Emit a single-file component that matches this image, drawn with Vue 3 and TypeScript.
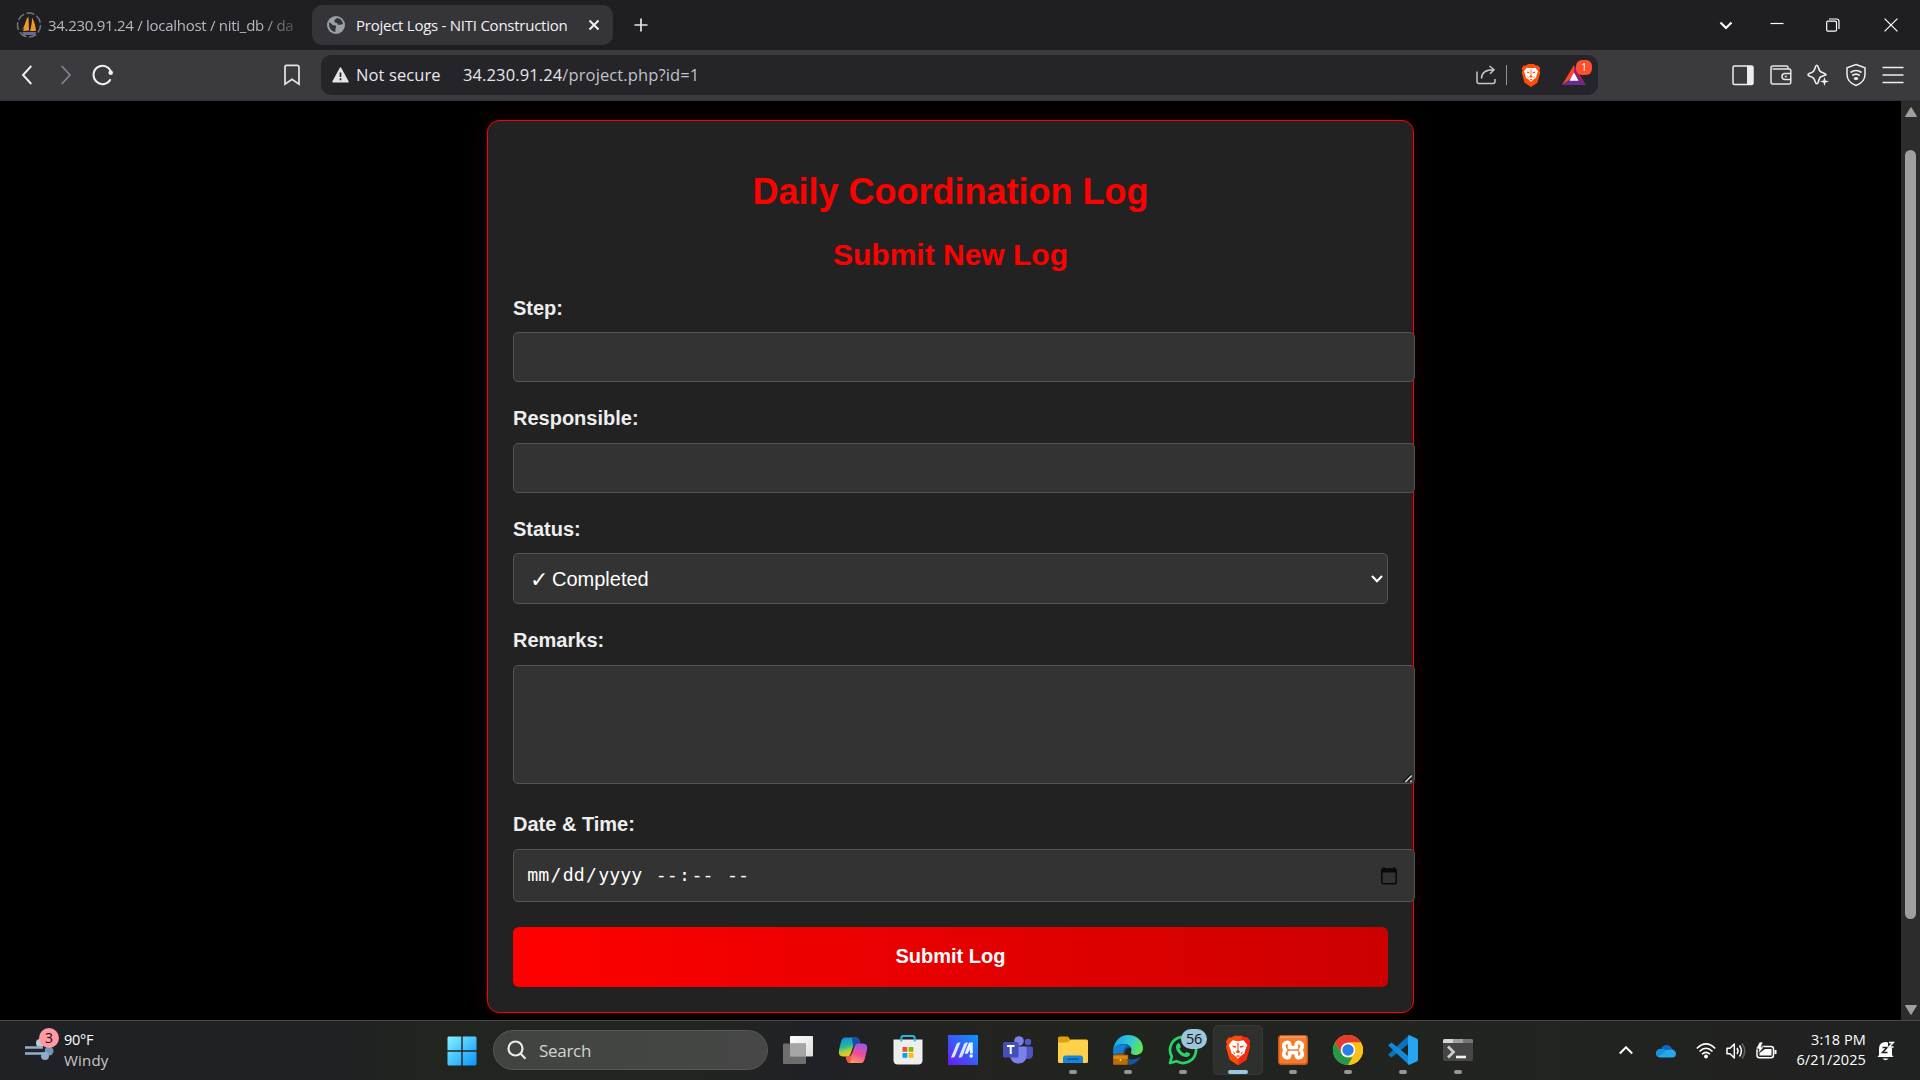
<script setup lang="ts">
import { ref } from 'vue'

const step = ref('')
const responsible = ref('')
const remarks = ref('')
const dateParts = ['mm', '/', 'dd', '/', 'yyyy']
</script>

<template>
  <div class="screen">
    <header class="tabbar">
      <div class="tab idle">
        <svg width="26" height="28" viewBox="0 0 26 28">
          <ellipse cx="13" cy="14" rx="11.5" ry="12" fill="none" stroke="#77767a" stroke-width="1.5" stroke-dasharray="8 2.5" />
          <path d="M11.5 5.500 C12 11 10 16 5.500 19 C8.500 16 9.500 11 11.500 5.500Z M12.500 5.500 L13 19.500 L7 20Z M16 6.500 C18.500 11 19.500 15 20 20 L14 20 C15.500 15 16 11 16 6.500Z" fill="#f39a1e" />
          <path d="M6 21 H20.500 L18.500 24 H8Z" fill="#66699b" />
        </svg>
        <span class="tab-title t-idle">34.230.91.24 / localhost / niti_db / da</span>
      </div>
      <div class="tab active">
        <svg width="18" height="18" viewBox="0 0 18 18">
          <circle cx="9" cy="9" r="9" fill="#9aa0a6" />
          <path d="M2 6.500 C4 6.500 4.500 9.200 7 9.300 C9.500 9.400 9.500 11 8.500 12.500 L8.300 16 C4.500 15.500 1.500 12 2 6.500Z M10 2 C8.500 3.500 7 3.500 7.500 5.500 C8 7.300 10.500 6.300 10.500 8 C10.500 9.500 14.500 8.500 16 8 C15.800 5 13.500 2.500 10 2Z" fill="#343439" />
        </svg>
        <span class="tab-title t-active">Project Logs - NITI Construction</span>
        <svg class="tab-close" width="12" height="12" viewBox="0 0 12 12"><path d="M1.500 1.500 L10.500 10.500 M10.500 1.500 L1.500 10.500" stroke="#f2f2f4" stroke-width="2" /></svg>
      </div>
      <svg class="plus" width="14" height="14" viewBox="0 0 14 14"><path d="M7 0.500V13.500M0.500 7H13.500" stroke="#e4e4e8" stroke-width="1.700" /></svg>
      <div class="window-controls">
        <svg width="14" height="14" viewBox="0 0 14 14"><path d="M1.500 4.500L7 10L12.500 4.500" fill="none" stroke="#fff" stroke-width="2.200" /></svg>
        <svg width="14" height="14" viewBox="0 0 14 14"><path d="M.5 5.500H13.500" stroke="#fff" stroke-width="1.200" /></svg>
        <svg width="14" height="14" viewBox="0 0 14 14" fill="none" stroke="#fff" stroke-width="1.200"><rect x=".7" y="3.200" width="9.800" height="10" rx="1.200" /><path d="M3 1H10.500Q13 1 13 3.500V11" /></svg>
        <svg width="14" height="14" viewBox="0 0 14 14"><path d="M.6.6L13.400 13.400M13.400.6L.6 13.400" stroke="#fff" stroke-width="1.200" /></svg>
      </div>
    </header>

    <nav class="toolbar">
      <svg class="back" width="12" height="20" viewBox="0 0 12 20"><path d="M10.300 1L2 10L10.300 19" fill="none" stroke="#f2f2f4" stroke-width="1.900" /></svg>
      <svg class="forward" width="12" height="20" viewBox="0 0 12 20"><path d="M1.700 1L10 10L1.700 19" fill="none" stroke="#85848a" stroke-width="1.700" /></svg>
      <svg class="reload" width="22" height="22" viewBox="0 0 22 22"><path d="M18.500 15.200A9 9.200 0 1 1 18.900 7.500" fill="none" stroke="#f2f2f4" stroke-width="2" /><circle cx="18.700" cy="8.800" r="2.300" fill="#f2f2f4" /></svg>
      <svg class="bookmark" width="18" height="22" viewBox="0 0 18 22"><path d="M3.500 1.300H14.500Q16 1.300 16 3V20.200L9 15.200L2 20.200V3Q2 1.300 3.500 1.300Z" fill="none" stroke="#e6e6ea" stroke-width="1.700" /></svg>
      <div class="address">
        <svg class="warn" width="17" height="16" viewBox="0 0 17 16"><path d="M8.500 1.200L16 14.800H1Z" fill="#e4e4e8" stroke="#e4e4e8" stroke-width="1.600" stroke-linejoin="round" /><path d="M8.500 5.500V10M8.500 11.300V13.200" stroke="#252429" stroke-width="1.700" /></svg>
        <span class="not-secure">Not secure</span>
        <span class="url">34.230.91.24<i>/project.php?id=1</i></span>
        <div class="address-actions">
          <svg width="20" height="20" viewBox="0 0 20 20" fill="none" stroke="#c5c5ca" stroke-width="1.500"><path d="M1 6.500V16.500Q1 18.500 3 18.500H17Q19 18.500 19 16.500V14" /><path d="M5.500 13.500C5.500 8 9.500 4.700 17.500 4.700M13.500 1L18 4.700L14 8.800" /></svg>
          <i class="separator"></i>
          <svg class="brave-small" width="20" height="23" viewBox="0 0 28 32">
            <path d="M7 2L10 0H18L21 2L24 2L27 6L26 9L27 12L23 26L14 32L5 26L1 12L2 9L1 6L4 2Z" fill="#ff4d0a" />
            <path d="M8 5L14 6L20 5L24 10L22 15L21 19L17 22L14 25L11 22L7 19L6 15L4 10Z" fill="#fff" />
            <path d="M7.500 10.500L12 11.300L11.500 13L9 12.500ZM20.500 10.500L16 11.300L16.500 13L19 12.500ZM13.300 8H14.700L14.500 15.500L16.500 17.500L14 19L11.500 17.500L13.500 15.500ZM8.500 16.500L11 19L10 20ZM19.500 16.500L17 19L18 20ZM11.500 22L14 21L16.500 22L14 23Z" fill="#ff4d0a" />
          </svg>
          <div class="rewards">
            <svg width="24" height="20" viewBox="0 0 24 20"><path d="M12 0L0 20L12 12Z" fill="#ff4724" /><path d="M12 0L24 20L12 12Z" fill="#9e1f63" /><path d="M0 20H24L12 11Z" fill="#662d91" /><path d="M12 7.500L16.500 15.700H7.500Z" fill="#fff" /></svg>
            <b>1</b>
          </div>
        </div>
      </div>
      <div class="browser-actions">
        <svg width="22" height="22" viewBox="0 0 22 22"><rect x="1" y="2" width="20" height="18.500" rx="1.500" fill="none" stroke="#ededf0" stroke-width="1.500" /><rect x="15" y="2" width="6" height="18.500" fill="#ededf0" /></svg>
        <svg width="22" height="22" viewBox="0 0 22 22" fill="none" stroke="#e6e6ea" stroke-width="1.500"><path d="M18 5V3.500Q18 2 16.500 2H3Q1 2 1 4V18Q1 20 3 20H19Q20.800 20 20.800 18V6.500Q20.800 5 19 5H2.500" /><path d="M21 9.500H15Q12 9.500 12 12.500Q12 15.500 15 15.500H21M14.800 12.500H16.800" /></svg>
        <svg width="22" height="22" viewBox="0 0 22 22"><path d="M9.800 1.200Q10.800 1.200 11.300 3.200C12.200 6.800 13 8 17 9.200Q19 9.800 19 10.800L13.500 13C12.200 14 12 16 11.200 18.300Q10.700 19.800 9.800 19.800Q8.900 19.800 8.300 18C7.200 14.500 6.500 13.500 2.800 12.300Q1 11.500 1 10.700Q1 9.900 2.800 9.300C6.500 8 7.200 7 8.300 3.200Q8.800 1.200 9.800 1.200Z" fill="none" stroke="#eeeef1" stroke-width="1.600" /><path d="M17.500 13L18.600 16.400L22 17.500L18.600 18.600L17.500 22L16.400 18.600L13 17.500L16.400 16.400Z" fill="#eeeef1" /></svg>
        <svg width="22" height="24" viewBox="0 0 22 24" fill="none" stroke="#eeeef1" stroke-width="1.500"><path d="M11 1.500L20 4.800V11C20 16.500 16.500 20.500 11 22.500C5.500 20.500 2 16.500 2 11V4.800Z" /><path d="M5.500 9.500Q11 5.500 16.500 9.500M7.200 12.500Q11 9.700 14.800 12.500" stroke-width="1.700" /><ellipse cx="11" cy="15.500" rx="2.200" ry="1.500" fill="#eeeef1" stroke="none" /></svg>
        <svg width="22" height="18" viewBox="0 0 22 18"><path d="M.5 1.500H21.500M.5 9H21.500M.5 16.500H21.500" stroke="#eeeef1" stroke-width="1.700" /></svg>
      </div>
    </nav>

    <div class="viewport">
      <main>
        <section class="card">
          <h1>Daily Coordination Log</h1>
          <h2>Submit New Log</h2>
          <form @submit.prevent>
            <label>Step:</label>
            <input v-model="step" class="field step" type="text" />
            <label>Responsible:</label>
            <input v-model="responsible" class="field responsible" type="text" />
            <label>Status:</label>
            <div class="field status">
              <span class="check">✓</span><span>Completed</span>
              <svg width="12" height="8" viewBox="0 0 12 8"><path d="M1 1L6 6.200L11 1" fill="none" stroke="#fff" stroke-width="2.200" /></svg>
            </div>
            <label>Remarks:</label>
            <div class="remarks-wrap">
              <textarea v-model="remarks" class="field remarks"></textarea>
              <svg class="grip" width="10" height="10" viewBox="0 0 10 10"><path d="M.5 9L8.500 1M5.500 9L8.500 6" stroke="#0d0d0d" stroke-width="1.500" /><path d="M2.200 9L8.700 2.500M7.200 9L8.700 7.500" stroke="#d6d6d6" stroke-width="1.500" /></svg>
            </div>
            <label class="date-label">Date &amp; Time:</label>
            <div class="field date">
              <span v-for="(part, i) in dateParts" :key="i" :class="{ part: part !== '/' }">{{ part }}</span>
              <span class="gap"></span>
              <span class="part">--</span><span>:</span><span class="part">--</span>
              <span class="gap"></span><span class="part">--</span>
              <svg width="16" height="18" viewBox="0 0 16 18"><path d="M3.200 0V2M12.800 0V2" stroke="#0a0a0a" stroke-width="1.600" /><rect x=".8" y="2" width="14.400" height="14.700" rx="1.400" fill="none" stroke="#0a0a0a" stroke-width="1.600" /><path d="M.5 1.800H15.500V5.500H.5Z" fill="#0a0a0a" /></svg>
            </div>
            <button type="submit">Submit Log</button>
          </form>
        </section>
      </main>
      <aside class="scrollbar">
        <svg width="12" height="10" viewBox="0 0 12 10"><path d="M6 .5L11.500 9.500H.5Z" fill="#a0a0a0" stroke="#a0a0a0" stroke-linejoin="round" /></svg>
        <i class="thumb"></i>
        <svg class="down" width="12" height="10" viewBox="0 0 12 10"><path d="M6 9.500L11.500 .5H.5Z" fill="#a0a0a0" stroke="#a0a0a0" stroke-linejoin="round" /></svg>
      </aside>
    </div>

    <footer class="taskbar">
      <div class="weather">
        <div class="wind">
          <svg width="30" height="32" viewBox="0 0 30 32">
            <circle cx="15" cy="14" r="4" fill="#bccbdc" /><circle cx="24" cy="22" r="4.500" fill="#7296b7" /><circle cx="20" cy="27" r="4" fill="#8eabca" />
            <path d="M0 18.500H18M0 24.500H21" stroke="#91aecb" stroke-width="2.600" /><path d="M0 21.500H20" stroke="#24272b" stroke-width="2" />
          </svg>
          <b>3</b>
        </div>
        <div class="weather-text"><span>90°F</span><span class="muted">Windy</span></div>
      </div>

      <div class="apps">
        <div class="slot start">
          <svg width="30" height="30" viewBox="0 0 30 30"><defs><linearGradient id="win" x1="0" y1="0" x2="1" y2="1"><stop offset="0" stop-color="#83f3ff" /><stop offset="1" stop-color="#0b93fb" /></linearGradient></defs><path d="M1.500 .5H14.300V14.300H.5V1.500ZM15.700 .5H28.500L29.500 1.500V14.300H15.700ZM.5 15.700H14.300V29.500H1.500L.5 28.500ZM15.700 15.700H29.500V28.500L28.500 29.500H15.700Z" fill="url(#win)" /></svg>
        </div>
        <div class="search">
          <svg width="20" height="20" viewBox="0 0 20 20" fill="none" stroke="#e8e9e8" stroke-width="2.200"><circle cx="8.500" cy="8.500" r="7" /><path d="M13.500 13.500L18.500 18.800" /></svg>
          <span>Search</span>
        </div>
        <div class="slot">
          <svg width="30" height="30" viewBox="0 0 30 30"><defs><linearGradient id="tv" x2="1" y2="1"><stop stop-color="#fff" /><stop offset="1" stop-color="#dcdcdc" /></linearGradient></defs><rect x="7" y="1" width="23" height="20.500" rx="1" fill="url(#tv)" /><rect x="0" y="8.500" width="23" height="20.500" rx="1" fill="#777" opacity=".9" /><rect x="7" y="8.500" width="16" height="13" fill="#a5a5a5" /></svg>
        </div>
        <div class="slot">
          <svg width="30" height="28" viewBox="0 0 30 28"><defs><linearGradient id="cpa" x2=".3" y2="1"><stop stop-color="#1784e6" /><stop offset=".5" stop-color="#22b8a0" /><stop offset=".75" stop-color="#a8cf3c" /><stop offset="1" stop-color="#f7c51d" /></linearGradient><linearGradient id="cpb" x1=".7" x2=".3" y2="1"><stop stop-color="#9a58e8" /><stop offset=".5" stop-color="#ee4d9a" /><stop offset="1" stop-color="#ffa052" /></linearGradient></defs>
            <path d="M7 1.500H18Q20.500 1.500 21.300 4.500L22.300 8H18Q15.800 8 15 11L12.500 18Q11.500 20.500 9 20.500H5Q0 20.500 1 14L3 6Q4 1.500 7 1.500Z" fill="url(#cpa)" />
            <path d="M14 1.500H18Q20.500 1.500 21.300 4.500L22.300 8H18Q16 8 15 11Z" fill="#194dad" />
            <path d="M23 27H12Q9.500 27 8.700 24L7.700 20.500H10Q13 20.500 14 17.500L16.700 10Q17.500 7.500 20 7.500H25Q30 7.500 29 13.500L27 22Q26 27 23 27Z" fill="url(#cpb)" />
            <path d="M12 27Q9.500 27 8.700 24L7.700 20.500H10Q13 20.500 14 17.500L13 24Z" fill="#ef5746" /></svg>
        </div>
        <div class="slot">
          <svg width="30" height="30" viewBox="0 0 30 30"><path d="M8.300 6V3Q8.300 1 10.300 1H19.700Q21.700 1 21.700 3V6" fill="none" stroke="#24b7e5" stroke-width="2" /><path d="M.5 4.500H29.500V25Q29.500 29.500 25 29.500H5Q.5 29.500 .5 25Z" fill="#eeeeee" /><path d="M8.300 4V6.500M21.700 4V6.500" stroke="#24b7e5" stroke-width="2" /><path d="M9.500 12H14.300V16.800H9.500Z" fill="#f25022" /><path d="M15.600 12H20.400V16.800H15.600Z" fill="#7fba00" /><path d="M9.500 18H14.300V22.800H9.500Z" fill="#00a4ef" /><path d="M15.600 18H20.400V22.800H15.600Z" fill="#ffb900" /></svg>
        </div>
        <div class="slot">
          <svg width="30" height="30" viewBox="0 0 30 30"><defs><linearGradient id="asus" x1="0" y1="1" x2="1" y2="0"><stop stop-color="#6d18f5" /><stop offset="1" stop-color="#059bfa" /></linearGradient></defs><rect width="30" height="30" fill="url(#asus)" /><path d="M3 22.500L8.500 9Q9.200 7.500 10.700 7.500H12.500L7 21Q6.300 22.500 4.800 22.500ZM10.500 22.500L16 9Q16.700 7.500 18.200 7.500H20L14.500 21Q13.800 22.500 12.300 22.500Z" fill="#dbe3ff" /><path d="M21 7.500H24.800V18.500H22V14.500L19.500 18.700H16.500Z" fill="#e6f0ff" /><circle cx="23.200" cy="21" r="1.700" fill="#fff" /></svg>
        </div>
        <div class="slot">
          <svg width="30" height="28" viewBox="0 0 30 28"><circle cx="25" cy="6" r="3.200" fill="#5059c9" /><path d="M19 10.500H28.500Q30 10.500 30 12V18Q30 23 25 23L19 22Z" fill="#4c55c4" /><circle cx="16" cy="5" r="4.800" fill="#7b83eb" /><path d="M8 10.500H22Q23.500 10.500 23.500 12V19Q23.500 27.500 15.500 27.500Q8 27.500 7 20Z" fill="#7b83eb" /><rect y="6" width="15.500" height="15.500" rx="1.500" fill="#454fb8" /><path d="M4 10H11.500M7.750 10V18" stroke="#fff" stroke-width="2" /></svg>
        </div>
        <div class="slot open">
          <svg width="30" height="28" viewBox="0 0 30 28"><path d="M0 2Q0 .5 1.500 .5H10L13 4.500H28.500Q30 4.500 30 6V26H0Z" fill="#dfa00c" /><path d="M0 6.500H9L13 3.500H28.500Q30 3.500 30 5V25.500Q30 27 28.500 27H1.500Q0 27 0 25.500Z" fill="#ffd04a" /><path d="M5 27V22Q5 19.500 7.500 19.500H22.500Q25 19.500 25 22V27Z" fill="#1685dc" /><path d="M9.500 23.200H20.500" stroke="#0b558f" stroke-width="1.500" /></svg>
        </div>
        <div class="slot open">
          <svg width="30" height="30" viewBox="0 0 30 30"><defs><linearGradient id="ea" x2="1" y2=".3"><stop stop-color="#159be6" /><stop offset=".6" stop-color="#31c7d9" /><stop offset="1" stop-color="#5ee45c" /></linearGradient></defs><path d="M0 16C1 6 7 0 15 0C24 0 30 6 30 13C30 18 26 20 22.500 20C19 20 17.500 18.500 18 17C20 13 16 9 11 9C6 9 2 11 0 16Z" fill="url(#ea)" /><path d="M0 15C2 11 6 9 11 9C14 9 17 10.500 18 13C13 12 11 16 12 20C13 25 20 26 28 22C25 27 20 30 15 30C6 30 0 24 0 15Z" fill="#1256a6" /><path d="M0 15C2 10 10 8 14 11C10 13 9 18 12 24L5 26Q0 22 0 15Z" fill="#137fd6" /><path d="M4 20V18.500H11V20M0 20H15V30H0Z" fill="#b96d08" stroke="#704005" stroke-width=".8" /><path d="M.5 20.500H14.500V24H.5Z" fill="#d88a12" /><circle cx="7.500" cy="25" r="1" fill="#ffdc65" /></svg>
        </div>
        <div class="slot open">
          <svg width="30" height="30" viewBox="0 0 30 30"><path d="M2 28L3.800 21.500A13 13 0 1 1 8.500 26.200Z" fill="none" stroke="#25d366" stroke-width="2.700" stroke-linejoin="round" /><path d="M9.500 8.500C10.500 7.500 11.500 8 12 9.500L12.800 11.500C13 12.300 12 13 11.500 13.700C12.500 16 14.500 17.500 16.700 18.500C17.500 18 18 16.800 18.700 17L21.500 18.300C23 19 21.500 21.500 19 22C13.500 22.500 6.500 15.500 8.200 10.500Z" fill="#25d366" /></svg>
          <b class="count">56</b>
        </div>
        <div class="slot open current">
          <svg width="26" height="31" viewBox="0 0 28 32">
            <path d="M7 2L10 0H18L21 2L24 2L27 6L26 9L27 12L23 26L14 32L5 26L1 12L2 9L1 6L4 2Z" fill="#ff4a0b" /><path d="M18 0L21 2H24L27 6L26 9L27 12L23 26L14 32Z" fill="#f52912" />
            <path d="M8 5L14 6L20 5L24 10L22 15L21 19L17 22L14 25L11 22L7 19L6 15L4 10Z" fill="#fff" />
            <path d="M7.500 10.500L12 11.300L11.500 13L9 12.500ZM20.500 10.500L16 11.300L16.500 13L19 12.500ZM13.300 8H14.700L14.500 15.500L16.500 17.500L14 19L11.500 17.500L13.500 15.500ZM8.500 16.500L11 19L10 20ZM19.500 16.500L17 19L18 20ZM11.500 22L14 21L16.500 22L14 23Z" fill="#fb3d10" />
          </svg>
        </div>
        <div class="slot open">
          <svg width="30" height="30" viewBox="0 0 30 30"><rect x=".7" y=".7" width="28.600" height="28.600" rx="2.500" fill="#f47d2d" stroke="#c9591a" stroke-width="1.400" /><path d="M2 2H28" stroke="#ffb887" /><path d="M8.500 7.500C12 6.500 12 10 11.500 12.500H18.500C18 10 18 6.500 21.500 7.500C25.500 9 24.500 13 22.500 15C24.500 17 25.500 21 21.500 22.500C18 23.500 18 20 18.500 17.500H11.500C12 20 12 23.500 8.500 22.500C4.500 21 5.500 17 7.500 15C5.500 13 4.500 9 8.500 7.500Z" fill="none" stroke="#fff" stroke-width="3.700" stroke-linejoin="round" /></svg>
        </div>
        <div class="slot open">
          <svg width="30" height="30" viewBox="0 0 30 30"><circle cx="15" cy="15" r="15" fill="#fbc116" /><path d="M2 7.500A15 15 0 0 1 28 7.500H15L8.500 18.700Z" fill="#e33b2e" /><path d="M2 7.500L8.500 18.700Q11 22.500 15 22.500H21.500L15 30A15 15 0 0 1 2 7.500Z" fill="#23994a" /><path d="M21.500 18.700L15 30A15 15 0 0 0 28 7.500H15Z" fill="#fbc116" /><circle cx="15" cy="15" r="7.300" fill="#fff" /><circle cx="15" cy="15" r="5.700" fill="#2b7de9" /></svg>
        </div>
        <div class="slot open">
          <svg width="30" height="30" viewBox="0 0 30 30"><path d="M21.500 8L3.500 22.500L0 19.700L21 0Z" fill="#0b73bd" /><path d="M21.500 22L3.500 7.500L0 10.300L21 30Z" fill="#1089d8" /><path d="M21 0L28.700 3.500Q30 4.200 30 5.500V24.500Q30 25.800 28.700 26.500L21 30Q20.200 29.500 20 28.500V1.500Q20.200 .5 21 0Z" fill="#26a3f1" /></svg>
        </div>
        <div class="slot open">
          <svg width="30" height="24" viewBox="0 0 30 24"><rect y="1" width="30" height="22" rx="1.500" fill="#464646" /><path d="M0 5V2.500Q0 1 1.500 1H10V5Z" fill="#d5d5d5" /><path d="M10 1H20V5H10Z" fill="#a0a0a0" /><path d="M20 1H28.500Q30 1 30 2.500V5H20Z" fill="#767676" /><path d="M5 8.500L10.500 14L5 19.500" fill="none" stroke="#ccc" stroke-width="2.700" /><path d="M13 19H23" stroke="#f2f2f2" stroke-width="2.600" /></svg>
        </div>
      </div>

      <div class="tray">
        <svg class="caret" width="14" height="9" viewBox="0 0 14 9"><path d="M.8 7.500L7 1.300L13.200 7.500" fill="none" stroke="#fff" stroke-width="2" /></svg>
        <svg class="cloud" width="20" height="14" viewBox="0 0 20 14"><path d="M5 5C7-.5 14-.5 16 5Q19.500 6 20 10H0Q0 5.500 5 5Z" fill="#0f68c4" /><path d="M0 9Q1 5 5 5Q7.500 5 9.500 6.300L15 5.500Q20 6 20 10Q19.500 13.500 16 13.500H4Q0 13 0 9Z" fill="#28a8ea" /><path d="M0 8Q2 4 6.500 5.200L10 7L2.500 12.500Q-.5 10 0 8Z" fill="#1490df" /></svg>
        <svg class="wifi" width="20" height="17" viewBox="0 0 20 17" fill="none" stroke="#fff" stroke-width="1.600"><path d="M.8 6.500Q10-2.800 19.200 6.500M3.500 9.500Q10 3 16.500 9.500M6 12.300Q10 8.300 14 12.300" /><circle cx="10" cy="14.500" r="1.900" fill="#fff" stroke="none" /></svg>
        <svg class="sound" width="20" height="18" viewBox="0 0 20 18" fill="none" stroke="#fff" stroke-width="1.500"><path d="M1 6.300H4L8.300 2V16L4 11.700H1Z" stroke-linejoin="round" /><path d="M11 6Q13 9 11 12M13.500 3.500Q17.300 9 13.500 14.500" /><path d="M16 1.500Q21.500 9 16 16.500" stroke="#656666" /></svg>
        <svg class="battery" width="21" height="17" viewBox="0 0 21 17"><rect x="1" y="4.500" width="16.500" height="11.300" rx="2.500" fill="none" stroke="#fff" stroke-width="1.500" /><path d="M3.500 13.500V11L9 7H15.500V13.500ZM18.500 8H20.500V12H18.500Z" fill="#fff" /><path d="M3.500 0L0 7H3L2 12L8 5H5L7 0Z" fill="#fff" stroke="#222423" stroke-width=".7" /></svg>
        <div class="clock"><span>3:18 PM</span><span>6/21/2025</span></div>
        <svg class="bell" width="18" height="20" viewBox="0 0 18 20"><path d="M2 14V8Q2 1 9 1Q15 2 15 8V14L16.500 16H.5ZM5.500 17.500H11.500Q8.500 21 5.500 17.500Z" fill="#fff" /><path d="M5.500 6.500H10L5.500 11.500H10.500" fill="none" stroke="#222423" stroke-width="1.600" /><path d="M11 0H18V6.500H11Z" fill="#222423" /><path d="M12 1.500H16.300L12 6H16.500" fill="none" stroke="#fff" stroke-width="1.500" /></svg>
      </div>
    </footer>
  </div>
</template>

<style>
body {
  margin: 0;
  background: #000;
}
</style>

<style scoped>
* {
  box-sizing: border-box;
}
svg {
  display: block;
  flex: none;
}
i {
  font-style: normal;
}
.screen {
  width: 1920px;
  height: 1080px;
  display: flex;
  flex-direction: column;
  overflow: hidden;
  background: #000;
  font-family: "Open Sans", "Noto Sans", sans-serif;
}
.tabbar {
  height: 50px;
  display: flex;
  align-items: center;
  background: #1f1e23;
}
.tab {
  display: flex;
  align-items: center;
}
.tab-title {
  overflow: hidden;
  white-space: nowrap;
  font-size: 15px;
  line-height: 24px;
}
.idle {
  width: 312px;
  padding-left: 16px;
}
.t-idle {
  width: 247px;
  margin-left: 6px;
  color: #b9b8bd;
  letter-spacing: -0.280px;
  -webkit-mask-image: linear-gradient(90deg, #000 210px, transparent 260px);
  mask-image: linear-gradient(90deg, #000 210px, transparent 260px);
}
.active {
  width: 301px;
  height: 40px;
  padding: 0 13px 0 15px;
  border-radius: 10px;
  background: #343439;
}
.t-active {
  margin-left: 11px;
  color: #f2f2f4;
  letter-spacing: -0.250px;
}
.tab-close {
  margin-left: auto;
}
.plus {
  margin-left: 21px;
}
.window-controls {
  display: flex;
  align-items: center;
  margin: 0 22px 0 auto;
}
.window-controls svg:nth-child(2) {
  margin-left: 37px;
}
.window-controls svg:nth-child(3) {
  margin-left: 42px;
}
.window-controls svg:nth-child(4) {
  margin-left: 44px;
}
.toolbar {
  height: 51px;
  display: flex;
  align-items: center;
  background: #3b3b3f;
  border-bottom: 1px solid #323236;
}
.back {
  margin-left: 21px;
}
.forward {
  margin-left: 27px;
}
.reload {
  margin-left: 20px;
}
.bookmark {
  margin-left: 169px;
}
.address {
  width: 1277px;
  height: 40px;
  display: flex;
  align-items: center;
  margin-left: 20px;
  padding-left: 11px;
  border-radius: 10px;
  background: #242429;
  white-space: nowrap;
  font-size: 16.5px;
}
.not-secure {
  width: 107px;
  margin-left: 7px;
  padding-bottom: 2px;
  color: #e8e8ec;
  letter-spacing: 0.100px;
}
.url {
  padding-bottom: 2px;
  color: #e8e8ec;
  letter-spacing: 0.120px;
}
.url i {
  color: #c2c2c8;
}
.address-actions {
  display: flex;
  align-items: center;
  margin-left: auto;
  padding-right: 12px;
}
.separator {
  width: 1px;
  height: 20px;
  margin-left: 10px;
  background: #929297;
}
.brave-small {
  margin-left: 14px;
}
.rewards {
  position: relative;
  margin-left: 21px;
}
.rewards b {
  position: absolute;
  left: 14px;
  top: -5px;
  width: 16px;
  height: 15px;
  border-radius: 6px;
  background: #ff4f2f;
  color: #fff;
  font-size: 10px;
  font-weight: 400;
  line-height: 15px;
  text-align: center;
}
.browser-actions {
  display: flex;
  align-items: center;
  gap: 15.500px;
  margin: 0 16px 0 auto;
}
.viewport {
  height: 919px;
  display: flex;
  font-family: "Liberation Sans", Arial, sans-serif;
}
main {
  width: 1901px;
  padding-top: 19px;
  overflow: hidden;
}
.card {
  width: 927px;
  height: 893px;
  margin: 0 auto;
  padding: 25px;
  border: 1px solid #f00;
  border-radius: 12px;
  background: #222;
  box-shadow: 0 0 25px rgba(255, 0, 0, 0.1);
}
h1,
h2 {
  color: #f00;
  text-align: center;
}
h1 {
  margin: 26px 0;
  font-size: 36px;
  line-height: 40px;
}
h2 {
  margin: 0 0 24px;
  font-size: 30px;
  line-height: 34px;
}
form {
  display: flex;
  flex-direction: column;
  align-items: flex-start;
}
label {
  color: #eee;
  font-size: 20px;
  font-weight: 700;
  line-height: 24px;
}
.field {
  display: flex;
  align-items: center;
  flex: none;
  width: 902px;
  margin: 0 0 24px;
  padding: 0 12px;
  border: 1px solid #555;
  border-radius: 5px;
  outline: none;
  background: #333;
  color: #fff;
  font-size: 20px;
}
.step {
  height: 50px;
  margin-top: 12px;
}
.responsible {
  height: 50px;
  margin-top: 13px;
}
.status {
  width: 875px;
  height: 51px;
  margin-top: 12px;
  padding: 0 4px 0 16px;
}
.status span {
  padding-top: 2px;
}
.status svg {
  margin-left: auto;
}
.check {
  width: 22px;
  font-family: "DejaVu Sans", sans-serif;
  font-size: 22px;
  line-height: 24px;
}
.remarks-wrap {
  position: relative;
  margin: 13px 0 29px;
}
.remarks {
  display: block;
  height: 119px;
  margin: 0;
  resize: none;
}
.grip {
  position: absolute;
  right: 2px;
  bottom: 1px;
}
.date-label {
  margin-top: -1px;
}
.date {
  height: 53px;
  margin: 13px 0 25px;
  padding: 0 17px 0 12px;
  font-family: "DejaVu Sans Mono", monospace;
  font-size: 18.300px;
}
.date span {
  padding-bottom: 2px;
}
.part {
  padding: 0 1.250px;
}
.gap {
  width: 11px;
}
.date svg {
  margin-left: auto;
}
button {
  width: 875px;
  height: 60px;
  padding: 0 0 1px;
  border: 0;
  border-radius: 6px;
  background: linear-gradient(90deg, #f00, #c00);
  color: #fff;
  font: 700 20px "Liberation Sans", Arial, sans-serif;
}
.scrollbar {
  width: 19px;
  display: flex;
  flex-direction: column;
  align-items: center;
  padding: 6px 0 5px;
  background: #2c2c2c;
}
.thumb {
  width: 11px;
  height: 769px;
  margin-top: 33px;
  border-radius: 6px;
  background: #9f9f9f;
}
.down {
  margin-top: auto;
}
.taskbar {
  height: 60px;
  display: flex;
  border-top: 1px solid #484849;
  background: linear-gradient(90deg, #202124 0, #202123 330px, #22251f 450px, #212520 700px, #202126 810px, #23241f 980px, #20231f 1250px, #222420 1550px, #202121 1920px);
}
.weather {
  display: flex;
  width: 436px;
  padding: 8px 0 0 25px;
  color: #fff;
}
.wind {
  position: relative;
  width: 30px;
}
.wind b {
  position: absolute;
  left: 14px;
  top: -1px;
  width: 20px;
  height: 20px;
  border-radius: 50%;
  background: #ff99a4;
  color: #111;
  font-size: 14px;
  font-weight: 400;
  line-height: 20px;
  text-align: center;
}
.weather-text,
.clock {
  display: flex;
  flex-direction: column;
  font-size: 14.500px;
  line-height: 20px;
  white-space: nowrap;
}
.weather-text {
  margin: 1px 0 0 9px;
  letter-spacing: -0.300px;
}
.muted {
  color: #c8c8c9;
  font-size: 15px;
  letter-spacing: 0.200px;
}
.apps {
  display: flex;
  gap: 5px;
  padding-top: 4px;
}
.slot {
  position: relative;
  width: 50px;
  height: 50px;
  display: flex;
  align-items: center;
  justify-content: center;
}
.start {
  padding: 1px 0 0 1px;
}
.search {
  width: 275px;
  height: 40px;
  display: flex;
  align-items: center;
  margin: 5px 0 0 2px;
  padding-left: 13px;
  border: 1px solid #555955;
  border-radius: 20px;
  background: linear-gradient(90deg, #40443f, #464746);
}
.search span {
  margin-left: 12px;
  padding-top: 1px;
  color: #d3d4d3;
  font-size: 17px;
  line-height: 24px;
  letter-spacing: -0.300px;
}
.open::after {
  content: "";
  position: absolute;
  bottom: 1px;
  left: 21px;
  width: 8px;
  height: 4px;
  border-radius: 2px;
  background: #969795;
}
.current {
  border-radius: 5px;
  background: #2d302c;
  box-shadow: inset 0 0 0 1px #343733;
}
.current::after {
  left: 15px;
  width: 20px;
  background: #9dc6db;
}
.count {
  position: absolute;
  left: 23px;
  top: 4px;
  width: 26px;
  height: 20px;
  border-radius: 10px;
  background: #9cc6dc;
  color: #111;
  font-size: 14.500px;
  font-weight: 400;
  line-height: 20px;
  letter-spacing: -0.400px;
  text-align: center;
}
.tray {
  display: flex;
  align-items: center;
  margin-left: auto;
  padding-right: 25px;
  color: #fff;
}
.cloud {
  margin-left: 23px;
}
.wifi {
  margin-left: 20px;
}
.sound {
  margin-left: 10px;
}
.battery {
  margin-left: 10px;
}
.clock {
  width: 80px;
  height: 42px;
  margin-left: 9px;
  align-items: flex-end;
  letter-spacing: 0.100px;
}
.bell {
  margin-left: 11px;
}
</style>
